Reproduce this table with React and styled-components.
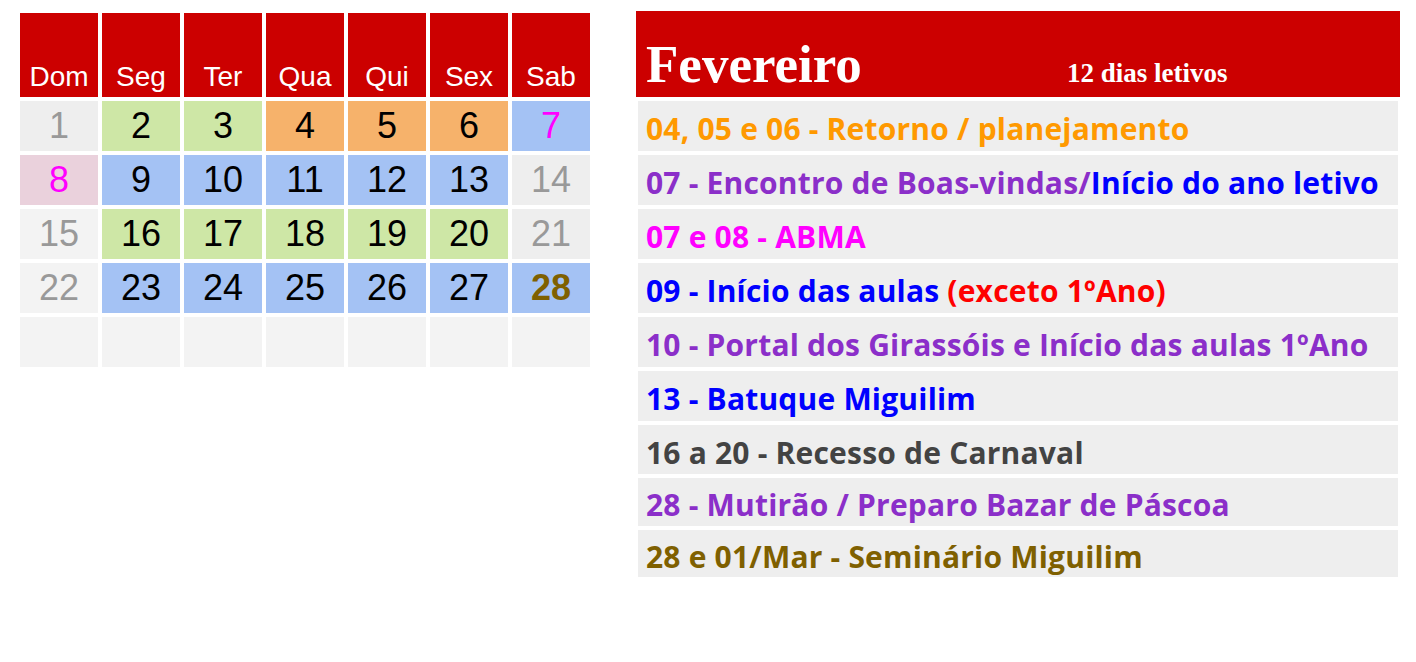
import React from 'react';
import styled, { createGlobalStyle } from 'styled-components';

//Global
const GlobalStyle = createGlobalStyle`
  body {
    margin: 0;
    background: #ffffff;
  }
`;

//Styled Components
const Page = styled.div`
  display: flex;
  align-items: flex-start;
  padding: 11px 0 0 20px;
`;

const Calendar = styled.div`
  display: grid;
  grid-template-columns: repeat(7, 78px);
  grid-template-rows: 84px repeat(5, 50px);
  gap: 4px;
  margin-top: 2px;
`;

const DayName = styled.div`
  background-color: #cc0000;
  color: #ffffff;
  font-family: 'Liberation Sans', Arial, sans-serif;
  font-size: 28px;
  line-height: 1;
  display: flex;
  align-items: flex-end;
  justify-content: center;
  padding-bottom: 6px;
  box-sizing: border-box;
`;

const DayCell = styled.div`
  background-color: ${(p) => p.$bg};
  color: ${(p) => p.$color};
  font-weight: ${(p) => (p.$bold ? 'bold' : 'normal')};
  font-family: 'Liberation Sans', Arial, sans-serif;
  font-size: 36px;
  line-height: 1;
  display: flex;
  align-items: center;
  justify-content: center;
`;

const Panel = styled.div`
  width: 764px;
  margin-left: 46px;
  display: flex;
  flex-direction: column;
  gap: 4px;
`;

const PanelHeader = styled.div`
  height: 86px;
  box-sizing: border-box;
  background-color: #cc0000;
  color: #ffffff;
  font-family: 'Liberation Serif', 'Times New Roman', serif;
  font-weight: bold;
  display: flex;
  align-items: baseline;
  padding: 27px 0 0 10px;
`;

const MonthTitle = styled.div`
  flex: 0 0 421px;
  font-size: 53px;
  line-height: 1;
`;

const SchoolDays = styled.div`
  font-size: 27px;
  line-height: 1;
`;

const EventRow = styled.div`
  height: ${(p) => p.$height || 50}px;
  margin: 0 2px;
  box-sizing: border-box;
  background-color: #eeeeee;
  display: flex;
  align-items: center;
  padding: 6px 0 0 8px;
  font-family: 'Open Sans', 'Noto Sans', sans-serif;
  font-weight: bold;
  font-size: 30px;
  letter-spacing: 0.2px;
  line-height: 1;
  white-space: nowrap;
`;

const EventText = styled.span`
  display: block;
`;

const Part = styled.span`
  color: ${(p) => p.$color};
`;

// Data
const GREEN = '#cee7a6';
const ORANGE = '#f6b26b';
const BLUE = '#a4c2f4';
const PINK = '#ead1dc';
const GREY = '#eeeeee';
const LIGHT = '#f3f3f3';

const days = ['Dom', 'Seg', 'Ter', 'Qua', 'Qui', 'Sex', 'Sab'];

const cells = [
  { n: 1, bg: GREY, color: '#999999' },
  { n: 2, bg: GREEN },
  { n: 3, bg: GREEN },
  { n: 4, bg: ORANGE },
  { n: 5, bg: ORANGE },
  { n: 6, bg: ORANGE },
  { n: 7, bg: BLUE, color: '#ff00ff' },
  { n: 8, bg: PINK, color: '#ff00ff' },
  { n: 9, bg: BLUE },
  { n: 10, bg: BLUE },
  { n: 11, bg: BLUE },
  { n: 12, bg: BLUE },
  { n: 13, bg: BLUE },
  { n: 14, bg: GREY, color: '#999999' },
  { n: 15, bg: LIGHT, color: '#999999' },
  { n: 16, bg: GREEN },
  { n: 17, bg: GREEN },
  { n: 18, bg: GREEN },
  { n: 19, bg: GREEN },
  { n: 20, bg: GREEN },
  { n: 21, bg: GREY, color: '#999999' },
  { n: 22, bg: LIGHT, color: '#999999' },
  { n: 23, bg: BLUE },
  { n: 24, bg: BLUE },
  { n: 25, bg: BLUE },
  { n: 26, bg: BLUE },
  { n: 27, bg: BLUE },
  { n: 28, bg: BLUE, color: '#7f6000', bold: true },
  { n: '', bg: LIGHT },
  { n: '', bg: LIGHT },
  { n: '', bg: LIGHT },
  { n: '', bg: LIGHT },
  { n: '', bg: LIGHT },
  { n: '', bg: LIGHT },
  { n: '', bg: LIGHT },
];

const PURPLE = '#8b2fc9';

const events = [
  { parts: [['04, 05 e 06 - Retorno / planejamento', '#ff9900']] },
  {
    parts: [
      ['07 - Encontro de Boas-vindas/', PURPLE],
      ['Início do ano letivo', '#0000ff'],
    ],
  },
  { parts: [['07 e 08 - ABMA', '#ff00ff']] },
  {
    parts: [
      ['09 - Início das aulas ', '#0000ff'],
      ['(exceto 1ºAno)', '#ff0000'],
    ],
  },
  { parts: [['10 - Portal dos Girassóis e Início das aulas 1ºAno', PURPLE]] },
  { parts: [['13 - Batuque Miguilim', '#0000ff']] },
  { parts: [['16 a 20 - Recesso de Carnaval', '#434343']], height: 49 },
  { parts: [['28 - Mutirão / Preparo Bazar de Páscoa', PURPLE]], height: 48 },
  { parts: [['28 e 01/Mar - Seminário Miguilim', '#7f6000']], height: 47 },
];

// Default Export
export default function App() {
  return (
    <>
      <GlobalStyle />
      <Page>
        <Calendar>
          {days.map((d) => (
            <DayName key={d}>{d}</DayName>
          ))}
          {cells.map((c, i) => (
            <DayCell key={i} $bg={c.bg} $color={c.color || '#000000'} $bold={c.bold}>
              {c.n}
            </DayCell>
          ))}
        </Calendar>
        <Panel>
          <PanelHeader>
            <MonthTitle>Fevereiro</MonthTitle>
            <SchoolDays>12 dias letivos</SchoolDays>
          </PanelHeader>
          {events.map((e, i) => (
            <EventRow key={i} $height={e.height}>
              <EventText>
                {e.parts.map(([text, color], j) => (
                  <Part key={j} $color={color}>
                    {text}
                  </Part>
                ))}
              </EventText>
            </EventRow>
          ))}
        </Panel>
      </Page>
    </>
  );
}
